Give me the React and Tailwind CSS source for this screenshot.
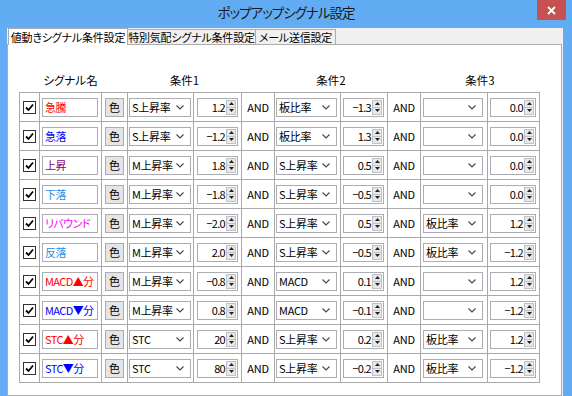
import React from "react";

const rows = [
  { name: "急騰", color: "text-[#ff0000]", c1: "S上昇率", v1: "1.2", c2: "板比率", v2: "−1.3", c3: "", v3: "0.0" },
  { name: "急落", color: "text-[#0000ff]", c1: "S上昇率", v1: "−1.2", c2: "板比率", v2: "1.3", c3: "", v3: "0.0" },
  { name: "上昇", color: "text-[#800080]", c1: "M上昇率", v1: "1.8", c2: "S上昇率", v2: "0.5", c3: "", v3: "0.0" },
  { name: "下落", color: "text-[#1e8ee6]", c1: "M上昇率", v1: "−1.8", c2: "S上昇率", v2: "−0.5", c3: "", v3: "0.0" },
  { name: "リバウンド", color: "text-[#ff00ff]", c1: "M上昇率", v1: "−2.0", c2: "S上昇率", v2: "0.5", c3: "板比率", v3: "1.2" },
  { name: "反落", color: "text-[#1e8ee6]", c1: "M上昇率", v1: "2.0", c2: "S上昇率", v2: "−0.5", c3: "板比率", v3: "−1.2" },
  { name: "MACD▲分", color: "text-[#ff0000]", c1: "M上昇率", v1: "−0.8", c2: "MACD", v2: "0.1", c3: "", v3: "1.2" },
  { name: "MACD▼分", color: "text-[#0000ff]", c1: "M上昇率", v1: "0.8", c2: "MACD", v2: "−0.1", c3: "", v3: "−1.2" },
  { name: "STC▲分", color: "text-[#ff0000]", c1: "STC", v1: "20", c2: "S上昇率", v2: "0.2", c3: "板比率", v3: "1.2" },
  { name: "STC▼分", color: "text-[#0000ff]", c1: "STC", v1: "80", c2: "S上昇率", v2: "−0.2", c3: "板比率", v3: "−1.2" },
];

const cols =
  "grid-cols-[19px_61px_25px_65px_47px_32px_65px_46px_32px_66px_51px]";

const Check = () => (
  <div className="w-[13px] h-[13px] border border-[#333333] bg-white flex items-center justify-center">
    <svg width="9" height="9" viewBox="0 0 9 9">
      <path d="M1 4.5 L3.5 7 L8 1.5" fill="none" stroke="#000" strokeWidth="1.8" />
    </svg>
  </div>
);

const Select = ({ value, w }) => (
  <div className={`${w} h-[19px] border border-[#abadb3] bg-white flex items-center pl-[2px] pr-[6px]`}>
    <span className="flex-1 text-[11px] leading-[17px] tracking-[-0.3px] whitespace-nowrap">{value}</span>
    <svg width="8" height="5" viewBox="0 0 8 5" className="shrink-0">
      <path d="M0.5 0.5 L4 4 L7.5 0.5" fill="none" stroke="#444" strokeWidth="1.1" />
    </svg>
  </div>
);

const Spin = ({ value, w }) => (
  <div className={`${w} h-[19px] border border-[#abadb3] bg-white flex items-stretch`}>
    <span className="flex-1 text-right pr-[1px] text-[11px] leading-[17px] tracking-[-0.7px]">{value}</span>
    <div className="w-[10px] my-[1px] mr-[1px] flex flex-col border border-[#c2c2c2] bg-[#e8e8e8]">
      <div className="flex-1 flex items-center justify-center border-b border-[#c2c2c2]">
        <svg width="5" height="3" viewBox="0 0 5 3">
          <path d="M0 3 L2.5 0 L5 3 Z" fill="#222" />
        </svg>
      </div>
      <div className="flex-1 flex items-center justify-center">
        <svg width="5" height="3" viewBox="0 0 5 3">
          <path d="M0 0 L5 0 L2.5 3 Z" fill="#222" />
        </svg>
      </div>
    </div>
  </div>
);

export default function App() {
  return (
    <div className="w-[572px] h-[396px] bg-[#61acf2] flex flex-col overflow-hidden text-black font-['Noto_Sans_CJK_JP',sans-serif] [font-feature-settings:'palt']">
      {/* title bar */}
      <div className="h-[28px] flex items-start shrink-0">
        <div className="w-[35px]" />
        <div className="flex-1 text-center text-[13.5px] leading-[24px] tracking-[-1px] text-[#1a1a1a]">
          ポップアップシグナル設定
        </div>
        <div className="w-[29px] h-[20px] mr-[6px] bg-[#c75050] flex items-center justify-center">
          <svg width="9" height="9" viewBox="0 0 9 9">
            <path d="M1 1 L8 8 M8 1 L1 8" stroke="#fff" strokeWidth="1.8" />
          </svg>
        </div>
      </div>

      {/* client */}
      <div className="flex-1 ml-[7px] mr-[9px] bg-[#f0f0f0] flex flex-col">
        <div className="h-[16px] flex items-end pl-[1px] text-[11px] tracking-[-0.2px] whitespace-nowrap">
          <div className="relative z-10 w-[120px] h-[17px] -mb-px bg-white border border-[#adadad] border-b-0 flex items-center justify-center">
            値動きシグナル条件設定
          </div>
          <div className="-ml-px w-[129px] h-[15px] bg-[#f0f0f0] border border-[#adadad] border-b-0 flex items-center justify-center">
            特別気配シグナル条件設定
          </div>
          <div className="-ml-px w-[81px] h-[15px] bg-[#f0f0f0] border border-[#adadad] border-b-0 flex items-center justify-center">
            メール送信設定
          </div>
        </div>

        <div className="flex-1 mr-[1px] bg-white border border-[#adadad] pt-[28px] pl-[11px]">
          {/* header */}
          <div className={`grid ${cols} gap-px px-px h-[14px] mb-[5px] text-[11.5px] leading-[14px]`}>
            <div className="col-start-2 text-center">シグナル名</div>
            <div className="col-start-4 col-span-2 text-center">条件1</div>
            <div className="col-start-7 col-span-2 text-center">条件2</div>
            <div className="col-start-10 col-span-2 text-center">条件3</div>
          </div>

          {/* table */}
          <div className={`grid ${cols} auto-rows-[28px] gap-px p-px w-fit bg-[#a9a9a9]`}>
            {rows.map((r, i) => (
              <React.Fragment key={i}>
                <div className="bg-white flex items-center justify-center">
                  <Check />
                </div>
                <div className="bg-white flex items-center pl-[2px]">
                  <div className={`w-[56px] h-[19px] border border-[#abadb3] bg-white px-[2px] text-[11px] leading-[17px] tracking-[-0.6px] whitespace-nowrap overflow-hidden ${r.color}`}>
                    {r.name}
                  </div>
                </div>
                <div className="bg-white flex items-center pl-[3px]">
                  <div className="w-[19px] h-[19px] border border-[#acacac] bg-[#e5e5e5] flex items-center justify-center text-[11px]">
                    色
                  </div>
                </div>
                <div className="bg-white flex items-center pl-[1px]">
                  <Select value={r.c1} w="w-[62px]" />
                </div>
                <div className="bg-white flex items-center pl-[3px]">
                  <Spin value={r.v1} w="w-[41px]" />
                </div>
                <div className="bg-white flex items-center justify-center text-[11px] tracking-[-0.2px]">
                  AND
                </div>
                <div className="bg-white flex items-center pl-[1px]">
                  <Select value={r.c2} w="w-[61px]" />
                </div>
                <div className="bg-white flex items-center pl-[2px]">
                  <Spin value={r.v2} w="w-[41px]" />
                </div>
                <div className="bg-white flex items-center justify-center text-[11px] tracking-[-0.2px]">
                  AND
                </div>
                <div className="bg-white flex items-center pl-[2px]">
                  <Select value={r.c3} w="w-[60px]" />
                </div>
                <div className="bg-white flex items-center pl-[2px]">
                  <Spin value={r.v3} w="w-[46px]" />
                </div>
              </React.Fragment>
            ))}
          </div>
        </div>
      </div>
    </div>
  );
}
